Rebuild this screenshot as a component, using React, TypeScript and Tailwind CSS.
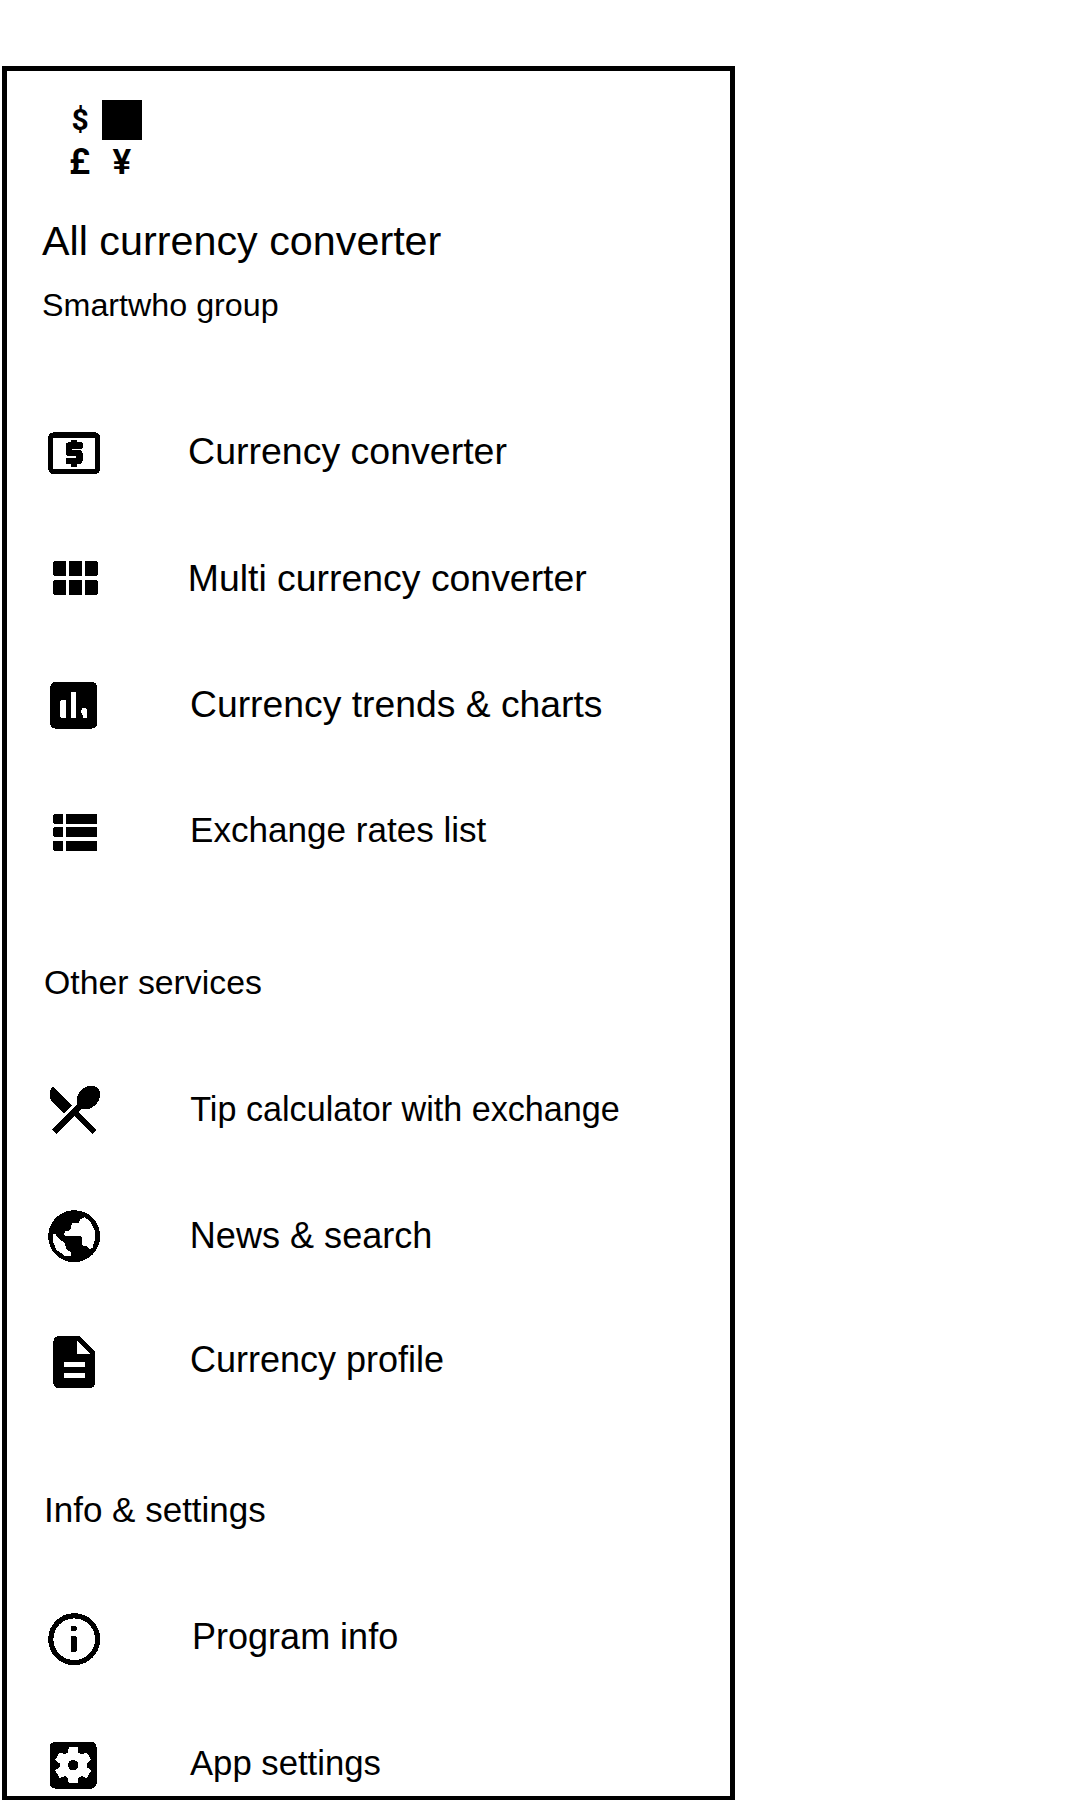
import type { ReactNode } from "react";
import { MdDescription, MdSettingsApplications } from "react-icons/md";

const iconClass = "size-[62.4px] shrink-0";

function Glyph({ children }: { children: ReactNode }) {
  return (
    <svg viewBox="0 0 24 24" className={iconClass} fill="currentColor" shapeRendering="crispEdges">
      {children}
    </svg>
  );
}

function CashIcon() {
  return (
    <Glyph>
      <rect x="3" y="5" width="18" height="14" rx="1" fill="none" stroke="currentColor" strokeWidth="2" />
      <path
        d="M11 17h2v-1h1c.55 0 1-.45 1-1v-3c0-.55-.45-1-1-1h-3v-1h4V8h-2V7h-2v1h-1c-.55 0-1 .45-1 1v3c0 .55.45 1 1 1h3v1H9v2h2z"
        stroke="currentColor"
        strokeWidth="0.4"
        strokeLinejoin="round"
      />
    </Glyph>
  );
}

function ModuleIcon() {
  return (
    <Glyph>
      {[5, 12.2].map((y) =>
        [4, 10, 16].map((x) => <rect key={`${x}-${y}`} x={x} y={y} width="5" height="5.9" rx="0.6" />),
      )}
    </Glyph>
  );
}

function ChartIcon() {
  return (
    <Glyph>
      <rect x="2.8" y="3" width="18" height="18" rx="2" />
      <g fill="white">
        <rect x="6.7" y="10" width="2.2" height="7" rx="0.6" />
        <rect x="10.8" y="6.8" width="2" height="10.2" rx="0.6" />
        <path d="M15.3 17v-1.2l-.6-.8v-.9l.6-1h1.2l.6 1V17z" />
      </g>
    </Glyph>
  );
}

function ListIcon() {
  return (
    <Glyph>
      {[5, 10, 15.3].map((y) => (
        <g key={y}>
          <rect x="4" y={y} width="3.8" height="3.9" rx="0.4" />
          <rect x="8.9" y={y} width="12" height="3.9" rx="0.4" />
        </g>
      ))}
    </Glyph>
  );
}

function CutleryIcon() {
  return (
    <Glyph>
      <path
        d="M8.1 13.34l2.83-2.83L3.91 3.5c-1.56 1.56-1.56 4.09 0 5.66l4.19 4.18zm6.78-1.81c1.53.71 3.68.21 5.27-1.38 1.91-1.91 2.28-4.65.81-6.12-1.46-1.46-4.2-1.1-6.12.81-1.59 1.59-2.09 3.74-1.38 5.27L3.7 19.87l1.41 1.41L12 14.41l6.88 6.88 1.41-1.41L13.41 13l1.47-1.47z"
        stroke="currentColor"
        strokeWidth="0.4"
        strokeLinejoin="round"
      />
    </Glyph>
  );
}

function GlobeIcon() {
  return (
    <Glyph>
      <circle cx="12" cy="12" r="10" />
      <g fill="white">
        <path d="M14.3 5.6l1.7-1 2.4 2.1 1.5 3v3.8l-.8 2.9-1.2.5-1.3-1.1-1.5-.3v-2.7l-.6-.8H8.5l-.4-.8.4-1.1 2-.4.6-2.7h2.6z" />
        <path d="M3.8 11h.9L6 12.9l2.5 1.7.3 2.1 1.9 1.6v1.3H8.5l-3.2-2.2-1.5-3.2z" />
      </g>
    </Glyph>
  );
}

function InfoIcon() {
  return (
    <Glyph>
      <circle cx="12" cy="12" r="9" fill="none" stroke="currentColor" strokeWidth="2" />
      <rect x="10.8" y="6.8" width="2.1" height="2.2" rx="0.6" />
      <rect x="10.8" y="10.9" width="2.1" height="6.1" rx="0.3" />
    </Glyph>
  );
}

function Row({ icon, label, className }: { icon: ReactNode; label: string; className: string }) {
  return (
    <li className="flex h-[126.4px] shrink-0 items-center pl-[36px]">
      {icon}
      <span className={`whitespace-nowrap leading-none ${className}`}>{label}</span>
    </li>
  );
}

export default function App() {
  return (
    <div className="h-[1800px] w-[1080px] overflow-hidden bg-white pl-[2px] pt-[66px] font-['Liberation_Sans',Arial,sans-serif] text-black">
      <nav className="flex h-[1734px] w-[733px] flex-col overflow-hidden border-[5px] border-b-4 border-black">
        <header className="h-[318.6px] shrink-0 pl-[35px] pt-[29px]">
          <div className="ml-[19px] grid w-[81px] grid-cols-[41px_40px] grid-rows-[40px_40px] font-['Roboto',sans-serif] leading-none">
            <span className="flex items-center pl-[10.5px] pb-[1px] text-[30px] font-bold">$</span>
            <span className="size-[40px] bg-black" />
            <span className="flex items-center pl-[8px] pt-[4px] text-[36px] font-semibold">£</span>
            <span className="flex items-center pl-[10.5px] pt-[4px] text-[35px] font-semibold">¥</span>
          </div>
          <h1 className="mt-[38.5px] whitespace-nowrap text-[41.3px] leading-[44px]">All currency converter</h1>
          <p className="mt-[22px] whitespace-nowrap text-[32.25px] leading-[40px]">Smartwho group</p>
        </header>

        <ul className="flex shrink-0 flex-col">
          <Row icon={<CashIcon />} label="Currency converter" className="ml-[82.7px] pb-[2.2px] text-[37.5px]" />
          <Row icon={<ModuleIcon />} label="Multi currency converter" className="ml-[82.4px] pb-[1.6px] text-[37.4px]" />
          <Row icon={<ChartIcon />} label="Currency trends & charts" className="ml-[84.6px] pb-[1.6px] text-[37.3px]" />
          <Row icon={<ListIcon />} label="Exchange rates list" className="ml-[84.6px] pb-[4px] text-[35.1px]" />
        </ul>

        <h2 className="flex h-[151.3px] shrink-0 items-center pl-[37px] pt-[24.2px] text-[33.8px] leading-none">Other services</h2>
        <ul className="flex shrink-0 flex-col">
          <Row icon={<CutleryIcon />} label="Tip calculator with exchange" className="ml-[84.9px] pb-[2px] text-[34.15px]" />
          <Row icon={<GlobeIcon />} label="News & search" className="ml-[84.4px] pb-[0.6px] text-[36.1px]" />
          <Row icon={<MdDescription className={iconClass} shapeRendering="crispEdges" />} label="Currency profile" className="ml-[84.6px] pb-[5px] text-[36px]" />
        </ul>

        <h2 className="flex h-[150.4px] shrink-0 items-center pl-[37px] pt-[16.4px] text-[35px] leading-none">Info &amp; settings</h2>
        <ul className="flex shrink-0 flex-col">
          <Row icon={<InfoIcon />} label="Program info" className="ml-[86.7px] pb-[4.6px] text-[36px]" />
          <Row
            icon={<MdSettingsApplications className="-ml-[0.6px] size-[62.4px] shrink-0" shapeRendering="crispEdges" />}
            label="App settings"
            className="ml-[85.2px] pb-[5px] text-[34.7px]"
          />
        </ul>
      </nav>
    </div>
  );
}
